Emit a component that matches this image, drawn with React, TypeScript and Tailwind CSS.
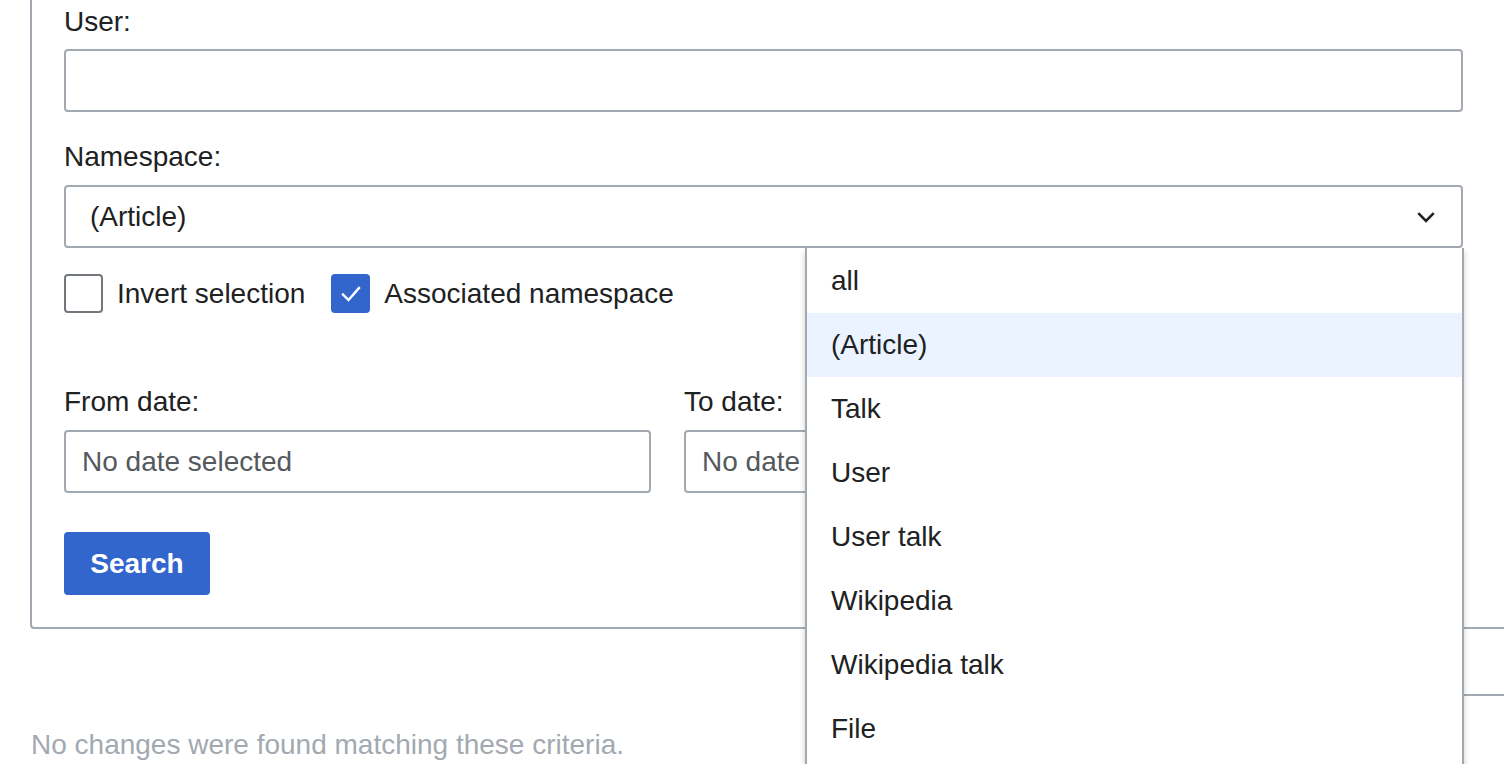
import React from "react";

const options = [
  "all",
  "(Article)",
  "Talk",
  "User",
  "User talk",
  "Wikipedia",
  "Wikipedia talk",
  "File",
  "File talk",
];

const Checkbox = ({ checked, label }: { checked?: boolean; label: string }) => (
  <label className="flex items-center gap-[14px]">
    {checked ? (
      <span className="flex h-[39px] w-[39px] items-center justify-center rounded-[4px] bg-[#3366cc]">
        <svg width="24" height="24" viewBox="0 0 24 24" fill="none">
          <polyline
            points="4,12.5 9.5,18 20,6"
            stroke="#fff"
            strokeWidth="2.4"
            strokeLinecap="square"
          />
        </svg>
      </span>
    ) : (
      <span className="h-[39px] w-[39px] rounded-[4px] border-2 border-[#72777d] bg-white" />
    )}
    <span>{label}</span>
  </label>
);

export default function App() {
  return (
    <div
      className="relative h-[764px] w-full overflow-hidden bg-white text-[28px] text-[#202122]"
      style={{ fontFamily: '"Liberation Sans", Arial, sans-serif' }}
    >
      {/* search form */}
      <div className="ml-[30px] w-[1520px] rounded-bl-[4px] border-b-2 border-l-2 border-[#a2a9b1] pb-[32px] pl-[32px]">
        <div className="leading-[44px]">User:</div>
        <div className="mt-[5px] h-[63px] w-[1399px] rounded-[4px] border-2 border-[#a2a9b1] bg-white" />

        <div className="mt-[23px] leading-[44px]">Namespace:</div>
        <div className="mt-[6px] flex h-[63px] w-[1399px] items-center justify-between rounded-[4px] border-2 border-[#a2a9b1] bg-white pl-[24px] pr-[24px]">
          <span>(Article)</span>
          <svg width="22" height="22" viewBox="0 0 20 20">
            <polyline
              points="3,6.5 10,13.5 17,6.5"
              fill="none"
              stroke="#202122"
              strokeWidth="2.4"
            />
          </svg>
        </div>

        <div className="mt-[26px] flex items-center gap-[26px] leading-[39px]">
          <Checkbox label="Invert selection" />
          <Checkbox checked label="Associated namespace" />
        </div>

        <div className="mt-[67px] flex gap-[33px]">
          <div className="w-[587px]">
            <div className="leading-[44px]">From date:</div>
            <div className="mt-[6px] flex h-[63px] items-center rounded-[4px] border-2 border-[#a2a9b1] bg-white pl-[16px] text-[#54595d]">
              No date selected
            </div>
          </div>
          <div className="w-[587px]">
            <div className="leading-[44px]">To date:</div>
            <div className="mt-[6px] flex h-[63px] items-center rounded-[4px] border-2 border-[#a2a9b1] bg-white pl-[16px] text-[#54595d]">
              No date selected
            </div>
          </div>
        </div>

        <button className="mt-[39px] flex h-[63px] w-[146px] items-center justify-center rounded-[4px] bg-[#3366cc] font-bold text-white">
          Search
        </button>
      </div>

      <div className="mt-[100px] pl-[31px] leading-[32px] text-[#a2a9b1]">
        No changes were found matching these criteria.
      </div>

      <div className="absolute left-[1300px] top-[694px] h-[2px] w-[204px] bg-[#a2a9b1]" />

      {/* open namespace menu */}
      <div className="absolute left-[805px] top-[248px] w-[659px] border-x-2 border-[#a2a9b1] bg-white pt-[1px] shadow-[0_4px_6px_rgba(0,0,0,0.2)]">
        {options.map((o) => (
          <div
            key={o}
            className={`flex h-[64px] items-center pl-[24px] ${o === "(Article)" ? "bg-[#eaf3ff]" : ""}`}
          >
            {o}
          </div>
        ))}
      </div>
    </div>
  );
}
